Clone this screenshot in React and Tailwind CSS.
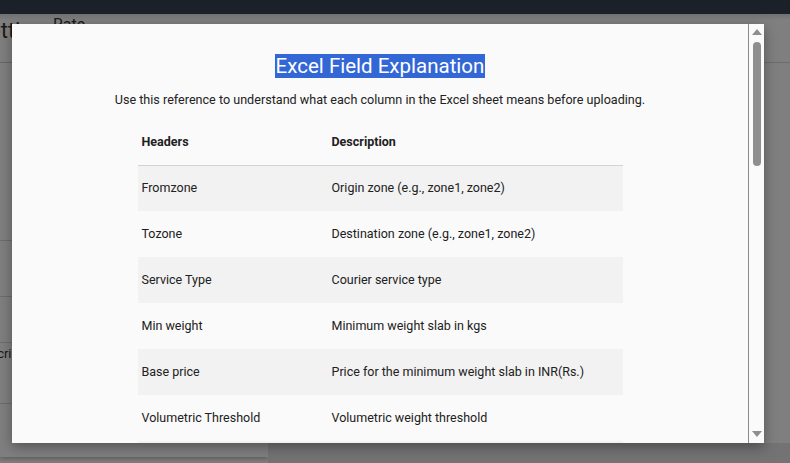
const rows = [
  ['Fromzone', 'Origin zone (e.g., zone1, zone2)'],
  ['Tozone', 'Destination zone (e.g., zone1, zone2)'],
  ['Service Type', 'Courier service type'],
  ['Min weight', 'Minimum weight slab in kgs'],
  ['Base price', 'Price for the minimum weight slab in INR(Rs.)'],
  ['Volumetric Threshold', 'Volumetric weight threshold'],
  ['Volumetric Divisor', 'Divisor used for volumetric weight'],
];

function Page() {
  return (
    <div className="h-full flex flex-col bg-[#7f7f7f]">
      <div className="h-[14px] bg-[#1b2029]" />
      <div className="h-[49px] border-b border-[#6c6c6c] flex items-start bg-gradient-to-b from-[#707070] to-[#7f7f7f] to-[6px]">
        <div className="w-[53px] overflow-hidden whitespace-nowrap">
          <span className="block text-[22px] leading-[26px] text-[#1a1a1a] mt-[4px] -ml-[24px]">Settings</span>
        </div>
        <span className="text-[16px] leading-[20px] text-[#1a1a1a] mt-[1px]">Rate</span>
      </div>
      <div className="flex-1 flex">
        <div className="w-[268px] h-[394px] flex flex-col shadow-[0_2px_4px_rgba(0,0,0,0.25)] bg-[#7f7f7f]">
          <div className="h-[178px] border-b border-[#6c6c6c]" />
          <div className="h-[56px] border-b border-[#6c6c6c]" />
          <div className="h-[46px] border-b border-[#6c6c6c] flex items-end">
            <span className="text-[13px] leading-[20px] text-[#1a1a1a] -ml-[25px] -mb-[22px]">Description</span>
          </div>
          <div className="h-[61px] border-b border-[#6c6c6c]" />
        </div>
        <div className="flex-1 flex flex-col">
          <div className="flex-1" />
          <div className="h-[20px] bg-[#737373]" />
        </div>
      </div>
    </div>
  );
}

function Scrollbar() {
  return (
    <div className="w-[16px] border-l border-[#8a8a8a] bg-[#fafafa] flex flex-col items-center">
      <div className="mt-[5px] w-0 h-0 border-l-[5px] border-r-[5px] border-b-[6px] border-l-transparent border-r-transparent border-b-[#8e8e8e]" />
      <div className="mt-[7px] w-[8px] h-[124px] rounded-full bg-[#8e8e8e]" />
      <div className="flex-1" />
      <div className="mb-[6px] w-0 h-0 border-l-[5px] border-r-[5px] border-t-[6px] border-l-transparent border-r-transparent border-t-[#8e8e8e]" />
    </div>
  );
}

export default function App() {
  return (
    <div className="relative w-[790px] h-[463px] overflow-hidden font-['Roboto',sans-serif] text-[#212121]">
      <Page />
      <div className="absolute left-[12px] top-[24px] w-[752px] h-[419px] bg-[#fafafa] flex shadow-[0_4px_12px_rgba(0,0,0,0.35)]">
        <div className="flex-1 overflow-hidden flex flex-col items-center pt-[30px]">
          <h2 className="text-[20.5px] leading-[24px] font-normal">
            <span className="bg-[#3367d6] text-white px-px">Excel Field Explanation</span>
          </h2>
          <p className="mt-[14px] text-[12.6px] leading-[16px] text-[#222]">
            Use this reference to understand what each column in the Excel sheet means before uploading.
          </p>
          <table className="mt-[12px] w-[485px] text-[12.5px] text-left border-collapse">
            <thead>
              <tr className="h-[45px] border-b border-[#d3d3d3]">
                <th className="w-[190px] px-[4px] font-bold">Headers</th>
                <th className="px-[4px] font-bold">Description</th>
              </tr>
            </thead>
            <tbody>
              {rows.map(([h, d], i) => (
                <tr key={h} className={`h-[46px] ${i % 2 === 0 ? 'bg-[#f2f2f2]' : ''}`}>
                  <td className="px-[4px]">{h}</td>
                  <td className="px-[4px]">{d}</td>
                </tr>
              ))}
            </tbody>
          </table>
        </div>
        <Scrollbar />
      </div>
    </div>
  );
}
